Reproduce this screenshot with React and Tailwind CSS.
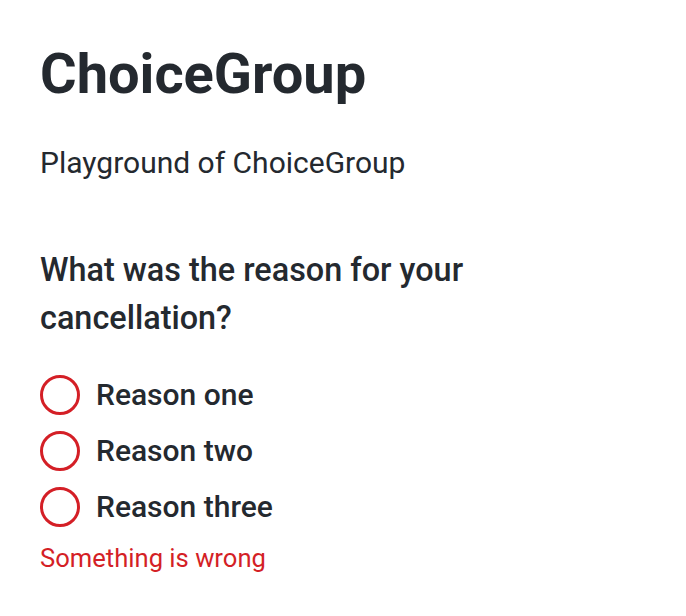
import React, { useState } from "react";

const options = ["Reason one", "Reason two", "Reason three"];

const App = () => {
  const [value, setValue] = useState(null);

  return (
    <div className="min-h-screen bg-white p-10 text-[#24292f] font-['Roboto',sans-serif]">
      <h1 className="text-[56px] leading-[56px] font-bold mt-[6px]">ChoiceGroup</h1>
      <p className="text-[30px] leading-[30px] mt-[46px]">Playground of ChoiceGroup</p>

      <fieldset className="mt-[68px] max-w-[520px]">
        <legend className="text-[32.4px] leading-[48px] font-medium">
          What was the reason for your cancellation?
        </legend>
        <div className="flex flex-col gap-4 mt-[33px]">
          {options.map((o) => (
            <label key={o} className="flex items-center gap-4 cursor-pointer">
              <span
                onClick={() => setValue(o)}
                className="w-10 h-10 rounded-full border-[3px] border-[#d41f26] flex items-center justify-center"
              >
                {value === o && <span className="w-5 h-5 rounded-full bg-[#d41f26]" />}
              </span>
              <span className="text-[30px] leading-10 font-medium">{o}</span>
            </label>
          ))}
        </div>
        <p className="text-[25.6px] leading-[26px] text-[#d41f26] mt-[18px]">Something is wrong</p>
      </fieldset>
    </div>
  );
};

export default App;
